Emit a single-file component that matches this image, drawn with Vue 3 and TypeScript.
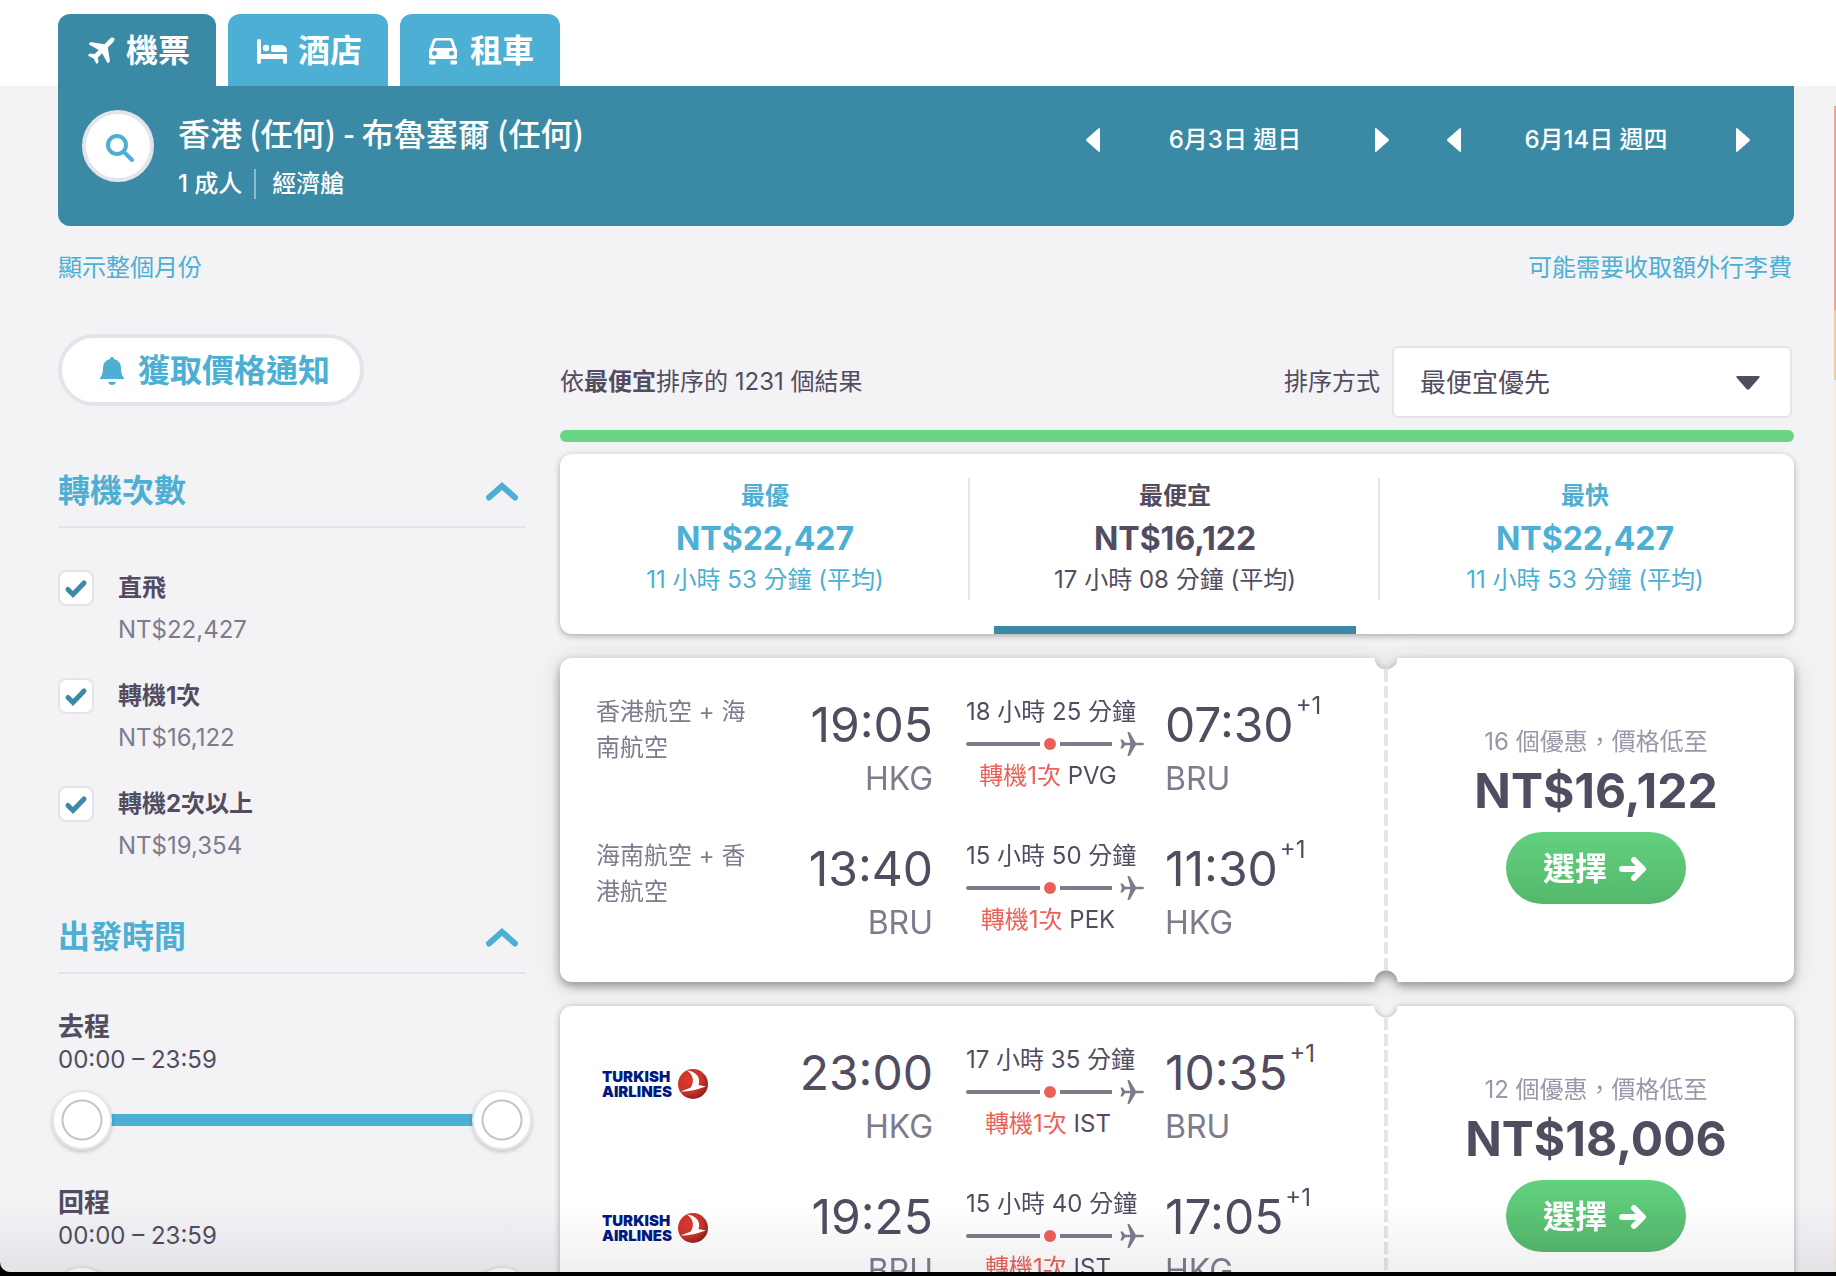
<script setup lang="ts">
import { computed, ref } from 'vue'

interface Leg {
  carrier: string
  logo?: boolean
  depart: string
  from: string
  duration: string
  via: string
  arrive: string
  to: string
}
interface Ticket {
  offers: number
  price: string
  raised: boolean
  legs: Leg[]
}

const dates = ref(['6月3日 週日', '6月14日 週四'])

const stops = ref([
  { id: 'direct', name: '直飛', price: 'NT$22,427', on: true },
  { id: 'one', name: '轉機1次', price: 'NT$16,122', on: true },
  { id: 'more', name: '轉機2次以上', price: 'NT$19,354', on: true },
])

const times = ref([
  { id: 'out', name: '去程', from: 0, to: 1439 },
  { id: 'back', name: '回程', from: 0, to: 1439 },
])

const clock = (m: number) =>
  `${String(Math.floor(m / 60)).padStart(2, '0')}:${String(m % 60).padStart(2, '0')}`

const sortKey = ref('cheapest')
const sorts = computed(() => [
  { id: 'best', name: '最優', price: 'NT$22,427', time: '11 小時 53 分鐘 (平均)' },
  { id: 'cheapest', name: '最便宜', price: 'NT$16,122', time: '17 小時 08 分鐘 (平均)' },
  { id: 'fastest', name: '最快', price: 'NT$22,427', time: '11 小時 53 分鐘 (平均)' },
])
const sortName = computed(() => sorts.value.find((s) => s.id === sortKey.value)?.name)

const tickets: Ticket[] = [
  {
    offers: 16,
    price: 'NT$16,122',
    raised: true,
    legs: [
      { carrier: '香港航空 + 海南航空', depart: '19:05', from: 'HKG', duration: '18 小時 25 分鐘', via: 'PVG', arrive: '07:30', to: 'BRU' },
      { carrier: '海南航空 + 香港航空', depart: '13:40', from: 'BRU', duration: '15 小時 50 分鐘', via: 'PEK', arrive: '11:30', to: 'HKG' },
    ],
  },
  {
    offers: 12,
    price: 'NT$18,006',
    raised: false,
    legs: [
      { carrier: 'TURKISH AIRLINES', logo: true, depart: '23:00', from: 'HKG', duration: '17 小時 35 分鐘', via: 'IST', arrive: '10:35', to: 'BRU' },
      { carrier: 'TURKISH AIRLINES', logo: true, depart: '19:25', from: 'BRU', duration: '15 小時 40 分鐘', via: 'IST', arrive: '17:05', to: 'HKG' },
    ],
  },
]
</script>

<template>
  <div class="desktop" lang="zh-Hant">
    <div class="window">
      <header class="top">
        <nav class="tabs">
          <a href="#flights" class="tab current">
            <svg class="plane-icon" viewBox="0 0 30 32" aria-hidden="true">
              <path transform="translate(18 15) rotate(-45) scale(1.250) translate(-12.500 -12)" d="M26 12c0-1.300-1.300-1.900-2.800-1.900h-6L11 1.600Q10.600 1 9.800 1H9q-.9 0-.6 1l2.300 8.100H6L3.600 7H2.200q-.8 0-.6.8L3 12l-1.400 4.200q-.2.8.6.8h1.400L6 13.900h4.700L8.400 22q-.3 1 .6 1h.8q.8 0 1.200-.6l6.200-8.500h6c1.500 0 2.800-.6 2.800-1.900z" />
            </svg>
            機票
          </a>
          <a href="#hotels" class="tab">
            <svg class="tab-icon" viewBox="0 0 32 32" aria-hidden="true">
              <rect x="3" y="4" width="4" height="25" rx="2" />
              <path d="M5 19h28v8a2 2 0 0 1-4 0v-3H5z" />
              <circle cx="12" cy="13" r="3.200" />
              <path d="M17 12a2 2 0 0 1 2-2h8q6 0 6 7H19a2 2 0 0 1-2-2z" />
            </svg>
            酒店
          </a>
          <a href="#cars" class="tab">
            <svg class="tab-icon" viewBox="0 0 32 32" aria-hidden="true">
              <path fill-rule="evenodd" d="M10 3h14q2.500 0 3.300 2.300L30 13q1 1 1 3v6q0 2-2 2H5q-2 0-2-2v-6q0-2 1-3l2.700-7.700Q7.500 3 10 3zm.8 2.600q-1 0-1.400 1L7.200 13h19.600l-2.200-6.400q-.4-1-1.400-1zM8.500 15.800a2.500 2.500 0 1 0 0 5 2.500 2.500 0 0 0 0-5zm17 0a2.500 2.500 0 1 0 0 5 2.500 2.500 0 0 0 0-5z" />
              <rect x="3" y="25.500" width="6.500" height="4" rx="1" />
              <rect x="24.500" y="25.500" width="6.500" height="4" rx="1" />
            </svg>
            租車
          </a>
        </nav>
      </header>

      <div class="page">
        <section class="search">
          <button class="search-btn" aria-label="搜尋">
            <svg viewBox="0 0 32 32" aria-hidden="true">
              <circle cx="13" cy="13" r="9" />
              <path d="M20 20l8 8" />
            </svg>
          </button>
          <div class="route">
            <h1>香港 (任何) - 布魯塞爾 (任何)</h1>
            <p><span>1 成人</span><span class="cabin">經濟艙</span></p>
          </div>
          <div class="dates">
            <div v-for="d in dates" :key="d" class="date">
              <button aria-label="前一天"><svg viewBox="0 0 14 24"><path d="M13 0Q14 0 14 1v22q0 1-1 1L.5 13q-.8-1 0-2z" /></svg></button>
              <span>{{ d }}</span>
              <button aria-label="後一天"><svg viewBox="0 0 14 24"><path d="M1 0Q0 0 0 1v22q0 1 1 1L13.500 13q.8-1 0-2z" /></svg></button>
            </div>
          </div>
        </section>

        <div class="links">
          <a href="#month">顯示整個月份</a>
          <a href="#baggage">可能需要收取額外行李費</a>
        </div>

        <div class="columns">
          <aside class="filters">
            <button class="alert">
              <svg viewBox="0 0 24 28" aria-hidden="true">
                <path d="M12 0q2 0 2 2 7 2 7 9 0 7 3 10v1H0v-1q3-3 3-10 0-7 7-9 0-2 2-2zM8 25h8q-1 3-4 3t-4-3z" />
              </svg>
              獲取價格通知
            </button>

            <section class="filter">
              <button class="filter-head">
                轉機次數
                <svg viewBox="0 0 32 20" aria-hidden="true"><path d="M3 16.500L16 5l13 11.500" /></svg>
              </button>
              <ul class="stops">
                <li v-for="s in stops" :key="s.id">
                  <span class="box">
                    <input :id="s.id" v-model="s.on" type="checkbox" />
                    <svg v-show="s.on" viewBox="0 0 36 36" aria-hidden="true"><path d="M10 19.500l5 5L26 13" /></svg>
                  </span>
                  <label :for="s.id"><strong>{{ s.name }}</strong><span>{{ s.price }}</span></label>
                </li>
              </ul>
            </section>

            <section class="filter">
              <button class="filter-head">
                出發時間
                <svg viewBox="0 0 32 20" aria-hidden="true"><path d="M3 16.500L16 5l13 11.500" /></svg>
              </button>
              <div v-for="t in times" :key="t.id" class="time">
                <strong>{{ t.name }}</strong>
                <span>{{ clock(t.from) }} – {{ clock(t.to) }}</span>
                <div class="range">
                  <div class="track"></div>
                  <input v-model.number="t.from" type="range" min="0" max="1439" :aria-label="t.name + '最早'" />
                  <input v-model.number="t.to" type="range" min="0" max="1439" :aria-label="t.name + '最晚'" />
                </div>
              </div>
            </section>
          </aside>

          <main class="results">
            <div class="bar">
              <p>依<b>{{ sortName }}</b>排序的 1231 個結果</p>
              <label for="sort">排序方式</label>
              <span class="select">
                <select id="sort" v-model="sortKey">
                  <option v-for="s in sorts" :key="s.id" :value="s.id">{{ s.name }}優先</option>
                </select>
                <svg viewBox="0 0 24 14" aria-hidden="true"><path d="M1.500 0h21q2 0 .8 1.800L13.500 13q-1.500 1.600-3 0L.7 1.800Q-.5 0 1.500 0z" /></svg>
              </span>
            </div>
            <div class="progress"></div>

            <div class="sorts">
              <button v-for="s in sorts" :key="s.id" :class="{ picked: s.id === sortKey }" @click="sortKey = s.id">
                <strong>{{ s.name }}</strong>
                <b>{{ s.price }}</b>
                <span>{{ s.time }}</span>
              </button>
            </div>

            <article v-for="t in tickets" :key="t.price" class="ticket" :class="{ raised: t.raised }">
              <div class="legs">
                <div v-for="leg in t.legs" :key="leg.depart" class="leg">
                  <div v-if="leg.logo" class="carrier logo">
                    <span>TURKISH<br />AIRLINES</span>
                    <svg viewBox="0 0 30 30" aria-hidden="true">
                      <defs>
                        <radialGradient id="ball" cx="38%" cy="35%" r="68%">
                          <stop offset="0" stop-color="#dc3a2e" />
                          <stop offset=".65" stop-color="#c93228" />
                          <stop offset="1" stop-color="#8f1f1c" />
                        </radialGradient>
                      </defs>
                      <circle cx="15" cy="15" r="15" fill="url(#ball)" />
                      <path fill="#fff" d="M8.500 1.500C15 5 17 12 12.500 18.800L2.500 22.500C12 22.500 19 20.500 28 17.500L20.500 16C23.500 8 17 2 8.500 1.500z" />
                    </svg>
                  </div>
                  <div v-else class="carrier">{{ leg.carrier }}</div>
                  <div class="stop depart"><time>{{ leg.depart }}</time><span>{{ leg.from }}</span></div>
                  <div class="path">
                    <span>{{ leg.duration }}</span>
                    <div class="line">
                      <i class="seg first"></i><i class="dot"></i><i class="seg"></i>
                      <svg viewBox="0 0 24 24" aria-hidden="true"><path d="M24 12c0-.9-1-1.300-2.200-1.300h-6L10 .8Q9.600 0 8.800 0H7.400l3 10.700H5.200L2.600 7.500H.4L2 12 .4 16.500h2.200l2.600-3.200h5.200l-3 10.700h1.400q.8 0 1.200-.8l5.800-9.900h6c1.200 0 2.200-.4 2.200-1.300z" /></svg>
                    </div>
                    <span><em>轉機1次</em> {{ leg.via }}</span>
                  </div>
                  <div class="stop"><time>{{ leg.arrive }}<sup>+1</sup></time><span>{{ leg.to }}</span></div>
                </div>
              </div>
              <div class="tear"><i></i></div>
              <div class="offer">
                <span>{{ t.offers }} 個優惠，價格低至</span>
                <b>{{ t.price }}</b>
                <button>
                  選擇
                  <svg viewBox="0 0 28 24" aria-hidden="true"><path d="M3 12h20M15 3l9 9-9 9" /></svg>
                </button>
              </div>
            </article>
          </main>
        </div>
      </div>
      <div class="advert"></div>
      <div class="shade"></div>
    </div>
  </div>
</template>

<style>
body {
  background: #000;
}
</style>

<style scoped>
* {
  box-sizing: border-box;
}
.desktop {
  height: 100vh;
  padding-bottom: 4px;
  background: #000;
  font: 24px/36px Inter, 'Noto Sans CJK TC', sans-serif;
  color: #524c61;
}
.window {
  position: relative;
  height: 100%;
  overflow: hidden;
  background: #f3f2f5;
  border-bottom-left-radius: 10px;
}
a {
  color: #4cafd3;
  text-decoration: none;
}
button {
  padding: 0;
  border: 0;
  background: none;
  font: inherit;
  color: inherit;
  cursor: pointer;
}
h1,
p,
ul {
  margin: 0;
  padding: 0;
  font-weight: inherit;
  list-style: none;
}
svg {
  display: block;
  flex: none;
}
.top {
  padding: 14px 42px 0 58px;
  background: #fff;
}
.tabs {
  display: flex;
  gap: 12px;
}
.tab {
  display: flex;
  align-items: center;
  gap: 12px;
  height: 72px;
  padding: 2px 26px 0;
  border-radius: 12px 12px 0 0;
  background: #4cafd3;
  color: #fff;
  font-size: 32px;
  font-weight: 700;
}
.tab.current {
  background: #3b8aa5;
}
.tab svg {
  height: 32px;
  overflow: visible;
  fill: #fff;
}
.plane-icon {
  width: 30px;
}
.tab-icon {
  width: 32px;
}
.page {
  padding: 0 42px 0 58px;
}
.search {
  display: flex;
  height: 140px;
  padding: 24px 44px 0 24px;
  border-radius: 0 0 12px 12px;
  background: #3b8aa5;
  color: #fff;
  font-weight: 500;
}
.search-btn {
  display: grid;
  place-items: center;
  width: 72px;
  height: 72px;
  padding: 4px 0 0 4px;
  border: 4px solid #e6e4ea;
  border-radius: 50%;
  background: #fff;
}
.search-btn svg {
  width: 32px;
  height: 32px;
  fill: none;
  stroke: #4cafd3;
  stroke-width: 4;
  stroke-linecap: round;
}
.route {
  margin-left: 24px;
}
.route h1 {
  font-family: 'Noto Sans CJK TC', sans-serif;
  font-size: 32px;
  line-height: 44px;
}
.route p {
  display: flex;
  align-items: center;
  margin-top: 15px;
  line-height: 30px;
}
.cabin {
  margin-left: 12px;
  padding-left: 16px;
  border-left: 2px solid #8fb9cb;
}
.dates {
  display: flex;
  gap: 58px;
  height: 60px;
  margin-left: auto;
}
.date {
  display: flex;
  align-items: center;
  justify-content: space-between;
  width: 303px;
}
.date span {
  padding-right: 5px;
}
.date svg {
  width: 14px;
  height: 24px;
  fill: #fff;
}
.links {
  display: flex;
  justify-content: space-between;
  padding: 24px 2px 0 0;
}
.columns {
  display: flex;
  gap: 34px;
  margin-top: 48px;
}
.filters {
  flex: none;
  width: 468px;
}
.alert {
  display: flex;
  align-items: center;
  gap: 14px;
  height: 72px;
  margin-bottom: 44px;
  padding: 2px 30px 0 38px;
  border: 4px solid #e6e4ea;
  border-radius: 36px;
  background: #fff;
  color: #4cafd3;
  font-size: 32px;
  font-weight: 700;
}
.alert svg {
  width: 24px;
  height: 28px;
  fill: #4cafd3;
}
.filter-head {
  display: flex;
  align-items: center;
  justify-content: space-between;
  width: 100%;
  height: 78px;
  padding: 6px 8px 0 0;
  border-bottom: 2px solid #e6e4ea;
  color: #4cafd3;
  font-size: 32px;
  font-weight: 700;
}
.filter-head svg {
  width: 32px;
  height: 20px;
  fill: none;
  stroke: #4cafd3;
  stroke-width: 6;
  stroke-linecap: round;
}
.stops {
  display: flex;
  flex-direction: column;
  gap: 30px;
  padding: 42px 0 32px;
}
.stops li {
  display: flex;
  gap: 24px;
}
.stops label,
.time {
  display: flex;
  flex-direction: column;
}
.stops label {
  gap: 6px;
}
.stops label span {
  color: #7f7b8d;
}
.box {
  display: grid;
  width: 36px;
  height: 36px;
}
.box > * {
  grid-area: 1 / 1;
}
.box input {
  appearance: none;
  width: 36px;
  height: 36px;
  margin: 0;
  border: 2px solid #e6e4ea;
  border-radius: 8px;
  background: #fff;
}
.box svg {
  pointer-events: none;
  fill: none;
  stroke: #3b8aa5;
  stroke-width: 5;
  stroke-linecap: round;
}
.time {
  padding-top: 36px;
}
.time strong {
  font-size: 26px;
  line-height: 34px;
}
.time span {
  line-height: 32px;
}
.range {
  display: grid;
  align-items: center;
  height: 60px;
  margin: 14px -6px 0;
}
.range > * {
  grid-area: 1 / 1;
}
.track {
  height: 12px;
  margin: 0 30px;
  background: #4cafd3;
}
.range input {
  appearance: none;
  width: 100%;
  height: 60px;
  margin: 0;
  background: none;
  pointer-events: none;
}
.range input::-webkit-slider-thumb {
  appearance: none;
  width: 60px;
  height: 60px;
  border: 2px solid #e6e4ea;
  border-radius: 50%;
  background: radial-gradient(circle, #fff 18px, #c4c3c7 19px, #c4c3c7 20px, #fff 21px);
  box-shadow: 0 2px 4px rgba(0, 0, 0, 0.2);
  pointer-events: auto;
}
.results {
  flex: 1;
  min-width: 0;
}
.bar {
  display: flex;
  align-items: center;
  height: 72px;
  margin-top: 12px;
  padding-right: 2px;
}
.bar p {
  margin-right: auto;
}
.select {
  display: grid;
  align-items: center;
  width: 400px;
  margin-left: 12px;
}
.select > * {
  grid-area: 1 / 1;
}
.select select {
  appearance: none;
  width: 100%;
  height: 72px;
  padding: 2px 60px 0 26px;
  border: 2px solid #e6e4ea;
  border-radius: 6px;
  background: #fff;
  font: inherit;
  font-size: 26px;
  color: inherit;
}
.select svg {
  justify-self: end;
  width: 24px;
  height: 14px;
  margin: 2px 32px 0 0;
  fill: #524c61;
  pointer-events: none;
}
.progress {
  height: 12px;
  margin-top: 12px;
  border-radius: 6px;
  background: #6ad485;
}
.sorts {
  display: flex;
  height: 180px;
  margin-top: 12px;
  padding-right: 4px;
  border-radius: 12px;
  background: #fff;
  box-shadow: 0 2px 6px rgba(0, 0, 0, 0.3);
}
.sorts button {
  display: flex;
  flex: 1;
  flex-direction: column;
  align-items: center;
  padding-top: 24px;
  color: #4cafd3;
  background: linear-gradient(#e6e4ea, #e6e4ea) right 24px / 2px 122px no-repeat;
}
.sorts button:last-child {
  background: none;
}
.sorts b {
  margin: 4px 0 2px;
  font-size: 32px;
  line-height: 42px;
}
.sorts .picked {
  color: #524c61;
}
.sorts .picked::after {
  content: '';
  align-self: stretch;
  height: 8px;
  margin: auto 24px 0;
  background: #3b8aa5;
}
.ticket {
  display: flex;
  height: 324px;
  margin-top: 24px;
  filter: drop-shadow(0 1px 3px rgba(0, 0, 0, 0.3));
}
.ticket.raised {
  filter: drop-shadow(0 4px 5px rgba(0, 0, 0, 0.35)) drop-shadow(0 2px 12px rgba(0, 0, 0, 0.12));
}
.legs {
  flex: 1;
  padding: 36px 0 0 36px;
  border-radius: 12px 0 0 12px;
  background: #fff;
}
.leg {
  display: flex;
  height: 144px;
}
.carrier {
  width: 150px;
  color: #7f7b8d;
}
.logo {
  display: flex;
  align-items: center;
  gap: 6px;
  height: 84px;
  padding-left: 6px;
  color: #00197f;
  font-size: 15px;
  font-weight: 900;
  line-height: 15px;
}
.logo svg {
  width: 30px;
  height: 30px;
}
.stop {
  display: flex;
  flex-direction: column;
}
.depart {
  width: 187px;
  align-items: flex-end;
}
.stop time {
  display: flex;
  font-size: 48px;
  line-height: 62px;
}
.stop span {
  color: #7f7b8d;
  font-size: 32px;
  line-height: 46px;
}
.stop sup {
  margin-left: 2px;
  font-size: 24px;
  line-height: 24px;
}
.path {
  width: 178px;
  margin: 0 21px 0 33px;
}
.path span {
  display: block;
  padding-right: 14px;
  text-align: center;
  white-space: nowrap;
}
.path em {
  color: #eb6158;
  font-style: normal;
}
.line {
  display: flex;
  align-items: center;
  height: 24px;
  margin: 2px 0;
}
.seg {
  flex: 1;
  height: 4px;
  background: #7f7b8d;
}
.seg.first {
  flex: 0 0 74px;
  border-radius: 2px 0 0 2px;
}
.dot {
  width: 12px;
  height: 12px;
  margin: 0 4px;
  border-radius: 50%;
  background: #eb6158;
}
.line svg {
  width: 24px;
  height: 24px;
  margin-left: 8px;
  fill: #7f7b8d;
}
.tear {
  display: flex;
  justify-content: center;
  width: 24px;
  padding: 12px 0;
  background:
    radial-gradient(circle at 50% 0, transparent 11px, #fff 12px) top / 100% 50% no-repeat,
    radial-gradient(circle at 50% 100%, transparent 11px, #fff 12px) bottom / 100% 50% no-repeat;
}
.tear i {
  width: 4px;
  background: repeating-linear-gradient(#e6e4ea 0 12px, transparent 12px 16px);
}
.offer {
  display: flex;
  flex-direction: column;
  align-items: center;
  width: 396px;
  padding-top: 66px;
  border-radius: 0 12px 12px 0;
  background: #fff;
}
.offer span {
  color: #9a97a8;
}
.offer b {
  font-size: 48px;
  line-height: 62px;
}
.offer button {
  display: flex;
  align-items: center;
  justify-content: center;
  gap: 12px;
  width: 180px;
  height: 72px;
  margin-top: 10px;
  padding: 2px 2px 0 0;
  border-radius: 36px;
  background: linear-gradient(#62d17e, #54b86c);
  color: #fff;
  font-size: 32px;
  font-weight: 700;
}
.offer svg {
  width: 28px;
  height: 24px;
  fill: none;
  stroke: #fff;
  stroke-width: 6;
  stroke-linecap: round;
  stroke-linejoin: round;
}
.advert {
  position: absolute;
  top: 106px;
  right: 0;
  bottom: 0;
  width: 2px;
  background: linear-gradient(#e3ab99 0 204px, #eccba8 204px 274px, #f3ece4 274px);
}
.shade {
  position: absolute;
  right: 0;
  bottom: 0;
  left: 0;
  height: 68px;
  background: linear-gradient(rgba(60, 55, 75, 0), rgba(60, 55, 75, 0.08));
  pointer-events: none;
}
</style>
